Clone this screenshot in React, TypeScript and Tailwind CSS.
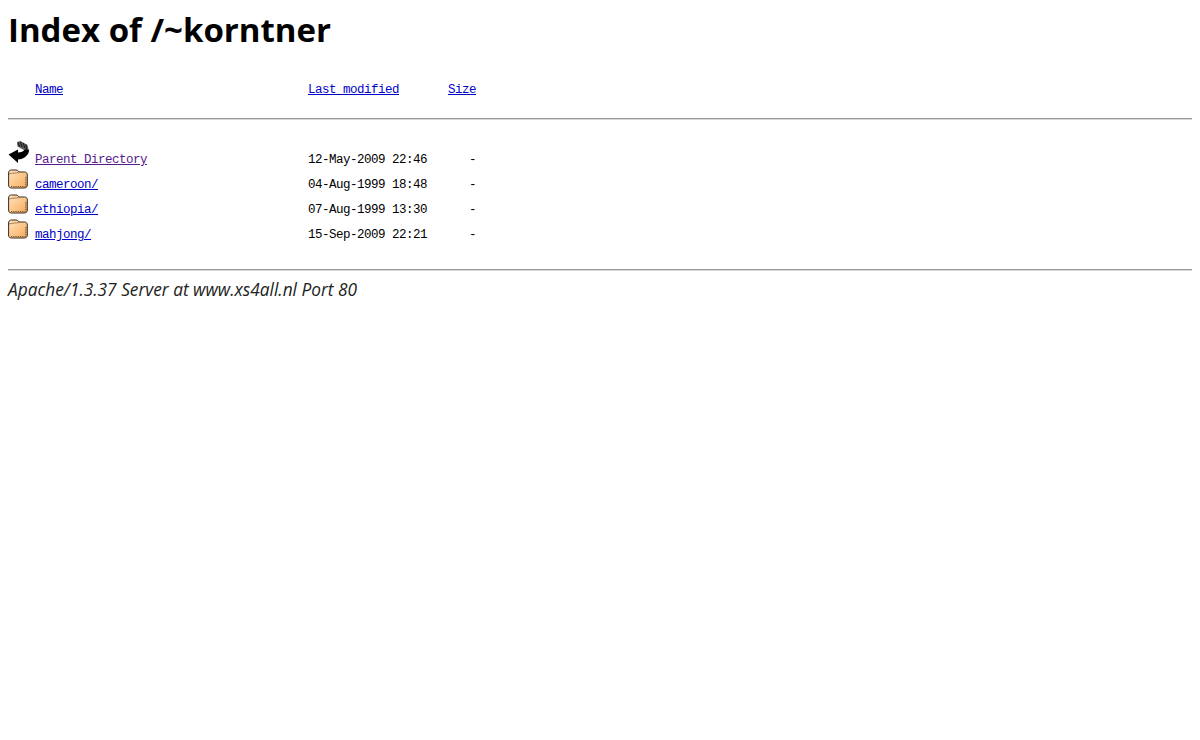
const rows = [
  { icon: "back", name: "Parent Directory", date: "12-May-2009 22:46", visited: true },
  { icon: "folder", name: "cameroon/", date: "04-Aug-1999 18:48" },
  { icon: "folder", name: "ethiopia/", date: "07-Aug-1999 13:30" },
  { icon: "folder", name: "mahjong/", date: "15-Sep-2009 22:21" },
];

function FolderIcon() {
  return (
    <svg width="20" height="20" viewBox="0 0 20 20">
      <defs>
        <linearGradient id="fold" x1="0" y1="0" x2="1" y2="1">
          <stop offset="0" stopColor="#ffe2bd" />
          <stop offset="0.6" stopColor="#fbc283" />
          <stop offset="1" stopColor="#eda863" />
        </linearGradient>
      </defs>
      <path
        d="M0.600 4C0.600 2 1.500 1 3.500 1h4.500c1.500 0 2.200.8 3 2h5.500c1.800 0 2.800 1 2.800 3v10c0 2-1 3-3 3H3.500c-2 0-2.900-1-2.900-3z"
        fill="url(#fold)"
        stroke="#3a2c1e"
        strokeWidth="1"
      />
      <path d="M1 5c3-1 7-1 10-1.300" fill="none" stroke="#8d6a45" strokeWidth="0.8" />
      <path d="M3 17.500h14.800V7" fill="none" stroke="#7d5a34" strokeWidth="1.200" strokeDasharray="1 0.800" />
    </svg>
  );
}

function BackIcon() {
  return (
    <svg width="22" height="22" viewBox="0 0 22 22">
      <path d="M9 1l3.500-1 7 4 1 4.500-4.500.5-3-1.500-3.500-2z" fill="#5d5d5d" />
      <path d="M10 1.500l1.500 4M12.500 1l1.500 5M15.500 2l1 5M18 3.500l.5 4.500" stroke="#111" strokeWidth="1" fill="none" />
      <path
        d="M0.500 13.500L10 8.500v3c3 0 5.500-.6 7-3.200l4 .2c.4 3-1.500 6-4.500 8-2 1.300-4 1.800-6.500 2.100v3.400z"
        fill="#000"
      />
    </svg>
  );
}

export default function App() {
  return (
    <div className="min-h-[740px] bg-white px-2 text-black [font-family:'Liberation_Mono',monospace]">
      <h1 className="pt-[8px] text-[33px] leading-[44px] font-bold [font-family:'Open_Sans',sans-serif]">
        Index of /~korntner
      </h1>
      <div className="mt-[30px] grid h-[16px] grid-cols-[27px_273px_140px_28px] items-center text-[12.5px] leading-[16px] tracking-[-0.5px]">
        <span />
        <a href="#" className="text-[#0000c8] underline">Name</a>
        <a href="#" className="text-[#0000c8] underline">Last modified</a>
        <a href="#" className="text-[#0000c8] underline">Size</a>
      </div>
      <hr className="mt-[20px] border-t border-b border-t-[#999999] border-b-[#d8d8d8]" />
      <div className="mt-[18px] flex flex-col">
        {rows.map((row) => (
          <div
            key={row.name}
            className="grid h-[25px] grid-cols-[27px_273px_140px_28px] items-end text-[12.5px] leading-[16px] tracking-[-0.5px] first:h-[30px]"
          >
            <span className={row.icon === "back" ? "flex items-end pb-[5px]" : "flex items-end pb-[4px]"}>
              {row.icon === "back" ? <BackIcon /> : <FolderIcon />}
            </span>
            <a href="#" className={row.visited ? "text-[#551a8b] underline" : "text-[#0000c8] underline"}>
              {row.name}
            </a>
            <span>{row.date}</span>
            <span className="text-right">-</span>
          </div>
        ))}
      </div>
      <hr className="mt-[26px] border-t border-b border-t-[#999999] border-b-[#d8d8d8]" />
      <address className="mt-[6px] text-[17.3px] leading-[26px] italic text-[#222222] [font-family:'Open_Sans',sans-serif]">
        Apache/1.3.37 Server at www.xs4all.nl Port 80
      </address>
    </div>
  );
}
